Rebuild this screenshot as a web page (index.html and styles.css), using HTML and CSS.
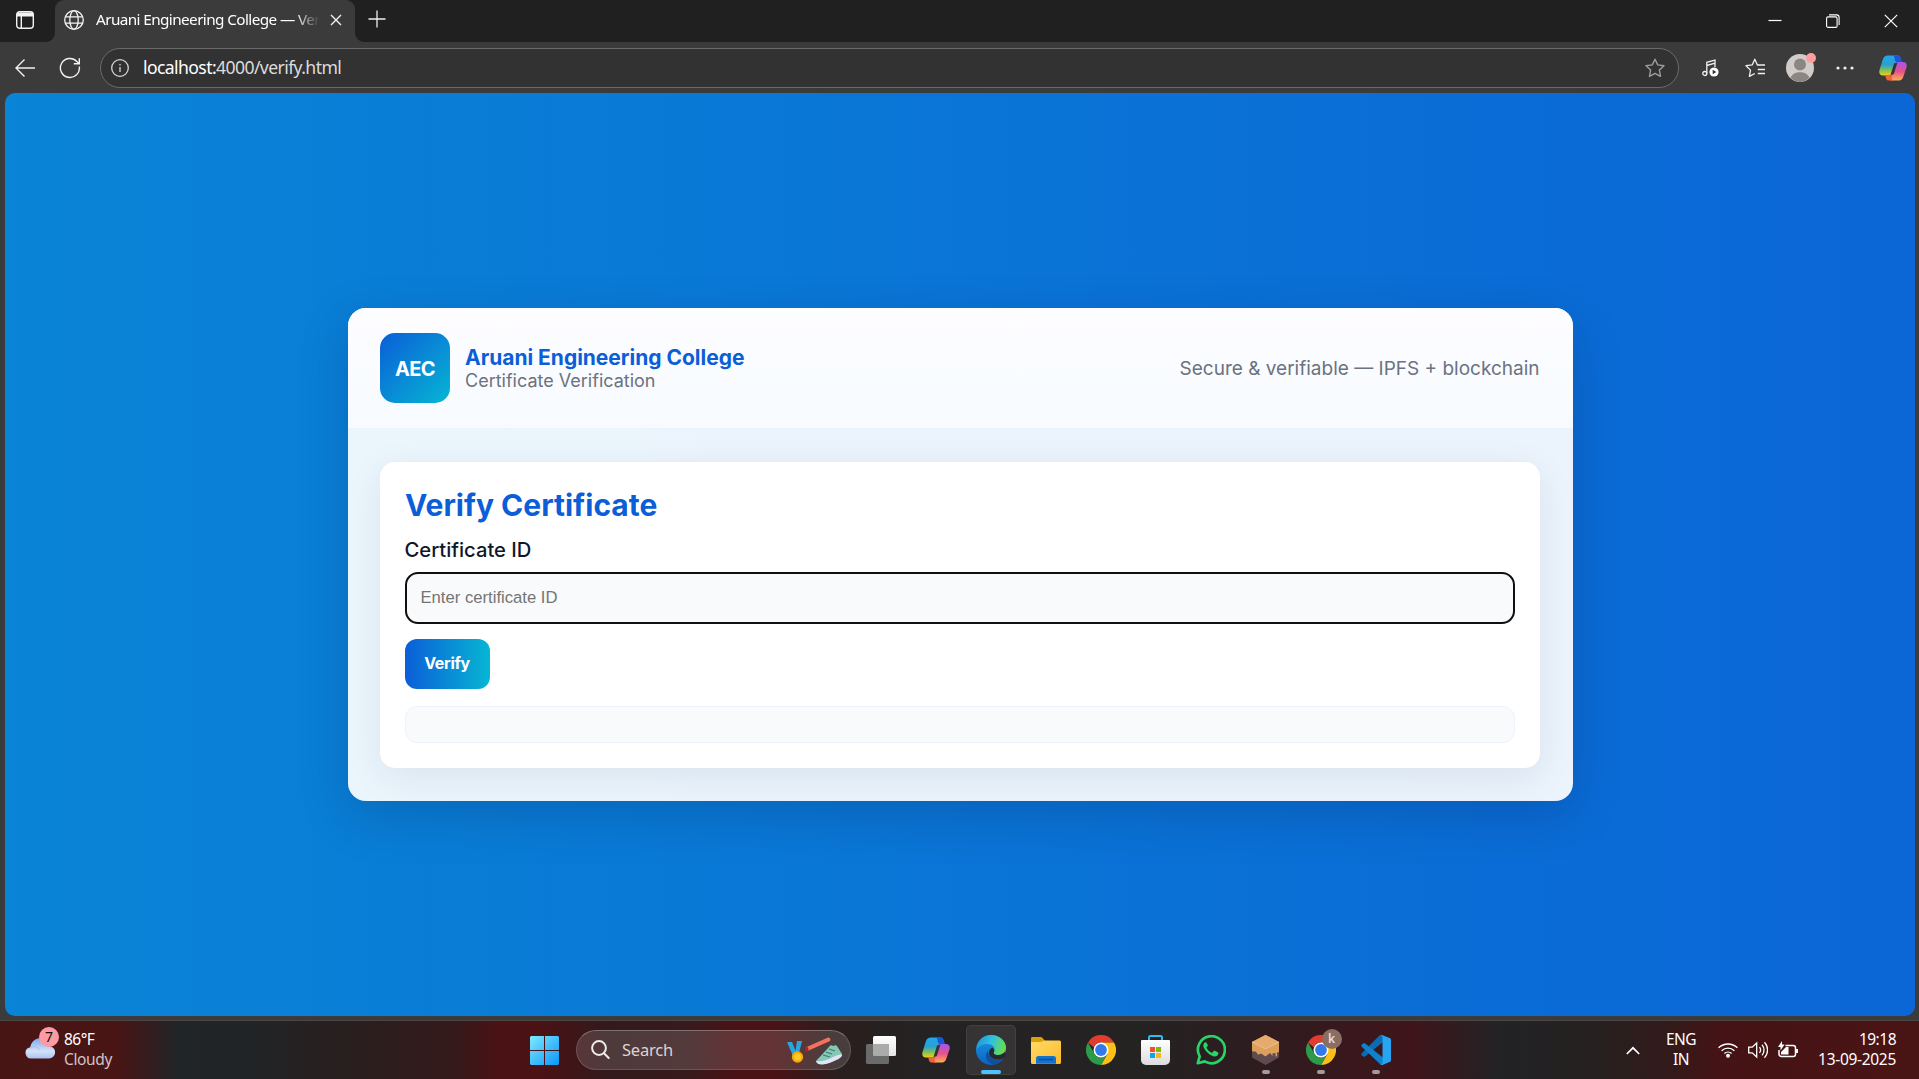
FILE: index.html
```html
<!DOCTYPE html>
<html lang="en">
<head>
<meta charset="utf-8">
<title>Aruani Engineering College — Verify Certificate</title>
<link rel="stylesheet" href="styles.css">
</head>
<body>
<svg class="defs" width="0" height="0" aria-hidden="true">
  <defs>
    <linearGradient id="cpA" x1="0" y1="0" x2="0" y2="1"><stop offset="0" stop-color="#1fa8ee"/><stop offset=".45" stop-color="#2b9fd0"/><stop offset=".7" stop-color="#72bd62"/><stop offset="1" stop-color="#f3cf16"/></linearGradient>
    <linearGradient id="cpB" x1="0" y1="0" x2="0" y2="1"><stop offset="0" stop-color="#9f57ee"/><stop offset=".5" stop-color="#e8508c"/><stop offset="1" stop-color="#ffae50"/></linearGradient>
    <linearGradient id="edA" x1="0" y1="0" x2="1" y2=".3"><stop offset="0" stop-color="#1b8fd8"/><stop offset=".55" stop-color="#33bfe0"/><stop offset="1" stop-color="#62dc57"/></linearGradient>
    <linearGradient id="edB" x1="0" y1="0" x2="0" y2="1"><stop offset="0" stop-color="#1a9be2"/><stop offset="1" stop-color="#0a62c4"/></linearGradient>
    <linearGradient id="winG" x1="0" y1="0" x2="1" y2="1"><stop offset="0" stop-color="#7deaff"/><stop offset="1" stop-color="#0d96f8"/></linearGradient>
    <linearGradient id="folG" x1="0" y1="0" x2="1" y2="1"><stop offset="0" stop-color="#ffdc66"/><stop offset="1" stop-color="#fcb92c"/></linearGradient>
    <linearGradient id="cloudG" x1="0" y1="0" x2="0" y2="1"><stop offset="0" stop-color="#7fa6ec"/><stop offset=".65" stop-color="#d3e2f8"/><stop offset="1" stop-color="#a9c3f2"/></linearGradient>
    <linearGradient id="storeG" x1="0" y1="0" x2="0" y2="1"><stop offset="0" stop-color="#fff"/><stop offset="1" stop-color="#dcdcdc"/></linearGradient>
    <linearGradient id="tvG" x1="0" y1="0" x2="0" y2="1"><stop offset="0" stop-color="#fff"/><stop offset="1" stop-color="#e4e4e4"/></linearGradient>
    <symbol id="copilot" viewBox="0 0 28 28">
      <path d="M9 1.500h9.500c1.800 0 2.600 1.200 3.100 3l1 3.500h-3.400c-1.800 0-2.700.8-3.200 2.600l-2.500 8.400c-.6 2-1.600 2.500-3.500 2.500H4c-3.200 0-4.300-2.500-3.500-5.500L3.800 5.500C4.600 2.800 6.400 1.500 9 1.500z" fill="url(#cpA)"/>
      <path d="M14.500 1.500h4c1.800 0 2.600 1.200 3.100 3l1 3.500h-3.400c-1.800 0-2.800-.2-3.300-2.100C15.500 4.300 15.600 2.500 14.500 1.500z" fill="#1a55dc"/>
      <path d="M19.600 8H24c3.200 0 4.300 2.500 3.500 5.500l-3.300 9.500c-.8 2.800-2.600 3.600-5.200 3.600h-5.600c-1.500 0-2.300-.3-1.800-2l3.900-13.800C16.300 8.700 17.700 8 19.600 8z" fill="url(#cpB)"/>
      <path d="M6.100 21.200h3.600c1.900 0 2.800-.5 3.300-2.200-.6 3.500-.3 6.500 1 7.600h-4c-1.800 0-2.600-1-3.100-2.700z" fill="#f4623a"/>
      <path d="M15.200 9.200 18.300 9l-3.600 11.300-3.200.7z" fill="#333"/>
    </symbol>
    <symbol id="chrome" viewBox="0 0 30 30">
      <path d="M2 7.500A15 15 0 0 1 28 7.500H15a7.500 7.500 0 0 0-7 5z" fill="#e33b2e"/>
      <path d="M28 7.500H15l6.500 11.250L15 30A15 15 0 0 0 28 7.500z" fill="#fbbf18"/>
      <path d="M2 7.500 8.500 18.750A7.500 7.500 0 0 0 21.500 18.750L15 30A15 15 0 0 1 2 7.500z" fill="#2c9a49"/>
      <circle cx="15" cy="15" r="7.500" fill="#fff"/><circle cx="15" cy="15" r="5.900" fill="#3478ea"/>
    </symbol>
  </defs>
</svg>

<div class="screen">
  <header class="tabstrip">
    <div class="strip-left">
      <svg width="18" height="18" viewBox="0 0 18 18" fill="none" stroke="#f2f2f2" stroke-width="1.400"><rect x=".7" y=".7" width="16.600" height="16.600" rx="3"/><path d="M1 1.500h16v4H1z" fill="#f2f2f2" stroke="none"/><path d="M5.300 5v12"/></svg>
    </div>
    <div class="tab-cell">
      <div class="tab">
        <svg width="20" height="20" viewBox="0 0 20 20" fill="none" stroke="#f4f4f4" stroke-width="1.300"><circle cx="10" cy="10" r="9.300"/><ellipse cx="10" cy="10" rx="4.200" ry="9.300"/><path d="M1.500 6.800h17M1.500 13.200h17"/></svg>
        <span class="tab-title">Aruani Engineering College — Ver</span>
        <svg class="tab-close" width="12" height="12" viewBox="0 0 12 12" stroke="#f4f4f4" stroke-width="1.400"><path d="M1 1l10 10M11 1 1 11"/></svg>
      </div>
    </div>
    <div class="strip-right">
      <svg class="newtab" width="18" height="18" viewBox="0 0 18 18" stroke="#eee" stroke-width="1.300"><path d="M9 .5v17M.5 9h17"/></svg>
      <div class="window-controls">
        <svg width="14" height="14" viewBox="0 0 14 14" stroke="#fff" stroke-width="1.200"><path d="M.5 6.500h13"/></svg>
        <svg width="14" height="14" viewBox="0 0 14 14" fill="none" stroke="#fff" stroke-width="1.100"><rect x=".6" y="2.900" width="10.500" height="10.500" rx="1.500"/><path d="M3 .9h7.700a2.400 2.400 0 0 1 2.400 2.400V11"/></svg>
        <svg width="14" height="14" viewBox="0 0 14 14" stroke="#fff" stroke-width="1.200"><path d="M.8.800l12.400 12.400M13.200.800.8 13.200"/></svg>
      </div>
    </div>
  </header>

  <nav class="toolbar">
    <svg class="nav-back" width="20" height="20" viewBox="0 0 20 20" fill="none" stroke="#f2f2f2" stroke-width="1.400"><path d="M20 10H1M9.500 1.500 1 10l8.500 8.500"/></svg>
    <svg class="nav-reload" width="22" height="22" viewBox="0 0 22 22" fill="none" stroke="#f2f2f2" stroke-width="1.400"><path d="M20.300 9.500A9.500 9.500 0 1 1 17.800 4.400L20 6.600M20.300 1.300v5.400h-5.500"/></svg>
    <div class="address">
      <svg width="18" height="18" viewBox="0 0 18 18" fill="none" stroke="#d6d6d6" stroke-width="1.300"><circle cx="9" cy="9" r="8.300"/><path d="M9 8v5M9 5v1.500"/></svg>
      <span class="url"><b>localhost:</b>4000/verify.html</span>
      <svg class="star" width="20" height="20" viewBox="0 0 20 20" fill="none" stroke="#9d9d9d" stroke-width="1.400" stroke-linejoin="round"><path d="M10 1.200l2.700 5.700 6.300.8-4.600 4.400 1.100 6.300-5.500-3-5.500 3 1.100-6.300L1 7.700l6.300-.8z"/></svg>
    </div>
    <div class="tools">
      <svg width="18" height="18" viewBox="0 0 18 18" fill="none" stroke="#f0f0f0" stroke-width="1.300"><circle cx="2.800" cy="14.500" r="2"/><path d="M4.800 14.500V3.300L13 1v7M4.800 6.500 13 4.200"/><circle cx="12" cy="13" r="4.600" fill="#fff" stroke="none"/><path d="M10.700 10.800v4.400l3.600-2.200z" fill="#333" stroke="none"/></svg>
      <svg width="21" height="20" viewBox="0 0 21 20" fill="none" stroke="#f0f0f0" stroke-width="1.300" stroke-linejoin="round"><path d="M20 7h-7.600L9.800 1.200 7.200 6.900l-6.200.8 4.500 4.400-1.100 6.300 5.400-2.900"/><path d="M12.800 11.500H20M12.800 15.500H20"/></svg>
      <div class="avatar"><svg width="28" height="28" viewBox="0 0 28 28"><circle cx="14" cy="14" r="14" fill="#cfccc9"/><circle cx="14" cy="10.500" r="6" fill="#8b8682"/><path d="M4.500 23.800c1.800-4 5.300-5.600 9.500-5.600s7.700 1.600 9.500 5.600A14 14 0 0 1 14 28a14 14 0 0 1-9.500-4.200z" fill="#8b8682"/></svg><i class="avatar-badge"></i></div>
      <svg width="18" height="4" viewBox="0 0 18 4" fill="#eee"><circle cx="2" cy="2" r="1.600"/><circle cx="9" cy="2" r="1.600"/><circle cx="16" cy="2" r="1.600"/></svg>
      <svg class="side-copilot" width="28" height="28"><use href="#copilot"/></svg>
    </div>
  </nav>

  <div class="viewport">
    <main class="card">
      <div class="card-head">
        <div class="logo">AEC</div>
        <div class="brand"><h1>Aruani Engineering College</h1><p>Certificate Verification</p></div>
        <div class="tagline">Secure &amp; verifiable — IPFS + blockchain</div>
      </div>
      <div class="card-body">
        <section class="panel">
          <h2>Verify Certificate</h2>
          <label for="cid">Certificate ID</label>
          <input id="cid" type="text" placeholder="Enter certificate ID">
          <button type="button">Verify</button>
          <div class="result"></div>
        </section>
      </div>
    </main>
  </div>

  <footer class="taskbar">
    <div class="weather">
      <div class="cloud"><svg width="30" height="22" viewBox="0 0 30 22"><path d="M6 21.500a5.700 5.700 0 0 1-.8-11.300C6.500 4.500 10.500 1 15.500 1c5 0 8.700 3 9.500 8.200a6.200 6.200 0 0 1-1 12.300z" fill="url(#cloudG)"/><path d="M5 11c4-2.500 8-1 9.500 2" fill="none" stroke="#a4c0f0"/></svg><i class="weather-badge">7</i></div>
      <div class="weather-text"><span>86°F</span><span class="dim">Cloudy</span></div>
    </div>
    <div class="start"><svg width="29" height="29" viewBox="0 0 29 29" fill="url(#winG)"><path d="M1 0h13v14H0V1zM15 0h13l1 1v13H15zM0 15h14v14H1l-1-1zM15 15h14v13l-1 1H15z"/></svg></div>
    <div class="search">
      <svg width="19" height="20" viewBox="0 0 19 20" fill="none" stroke="#f0eaea" stroke-width="2" stroke-linecap="round"><circle cx="8" cy="8" r="6.900"/><path d="M13 13.200l4.700 4.800"/></svg>
      <span>Search</span>
      <svg class="doodle" width="56" height="29" viewBox="0 0 56 29"><path d="M0 6h5l4 10-3 4zM10 5h5l-3 12-4 1z" fill="#2aa5e4"/><circle cx="10.500" cy="21" r="5.700" fill="#f5a800"/><circle cx="10.500" cy="21" r="3.500" fill="#ffc928"/><path d="M18.500 11.500 41 1.500c2-.8 3.200 2.700 1.500 3.800L20.500 15z" fill="#f4705f"/><ellipse cx="19.800" cy="13.200" rx="1.700" ry="2.500" fill="#9c2c2a"/><path d="M29 25 42 11c1-2 3-2 4-1 2-1 3-1 4 0l5 8c1 3-6 6-11 8-6 3-14 3-15-1z" fill="#85c8b6"/><path d="M29 25c5 1 12-1 17-4 4-2 8-3 9-2 0 3-6 5-10 7-7 3-15 4-16-1z" fill="#e4e2f4"/><path d="M36 19l7 2M39 16l6 2M42 13l6 2" stroke="#3c7d74" stroke-width="1.200"/></svg>
    </div>
    <div class="apps">
      <div class="app"><svg width="30" height="28" viewBox="0 0 30 28"><rect x="7" width="23" height="20" rx="1.500" fill="url(#tvG)"/><path d="M1.500 8h20a1.500 1.500 0 0 1 1.500 1.500v17a1.500 1.500 0 0 1-1.500 1.500h-20A1.500 1.500 0 0 1 0 26.500v-17A1.500 1.500 0 0 1 1.500 8z" fill="#6a6a6a"/><path d="M7 8h14.500A1.500 1.500 0 0 1 23 9.500V20H8.500A1.500 1.500 0 0 1 7 18.500z" fill="#ababab"/></svg></div>
      <div class="app"><svg width="28" height="28"><use href="#copilot"/></svg></div>
      <div class="app active"><svg width="30" height="30" viewBox="0 0 30 30"><circle cx="15" cy="15" r="15" fill="url(#edB)"/><path d="M1 10C3.500 3.500 9 0 15 0c8.500 0 15 6 15 12.500 0 4.500-3.200 7.500-7.500 7.500-4 0-5.500-1.500-4.500-3 2-4-1-8-6.500-8C6.500 9 2.500 11 .5 15z" fill="url(#edA)"/><path d="M18 17c-1 1.500.5 3 4.500 3 2.500 0 5-1.200 6.500-3.200 1.300 1.500.7 4.200-.7 6.200-6 3-13.300 1.500-15-3.500-.9-3 .5-6 3-6.800 1.700 1 2.400 2.600 1.700 4.300z" fill="#29292a"/><path d="M12 15.500c-.5 7.500 8 12 16.300 7.500A15 15 0 0 1 19 29.500C12 29 7 21.500 12 15.500z" fill="#11509c"/></svg></div>
      <div class="app"><svg width="30" height="27" viewBox="0 0 30 27"><path d="M0 1.500C0 .5.500 0 1.500 0h8c1 0 1.700.4 2.300 1.200L14 4v6H0z" fill="#dba008"/><path d="M0 5h10l3.500-1.500H28.500A1.500 1.500 0 0 1 30 5v20.500a1.500 1.500 0 0 1-1.500 1.500h-27A1.500 1.500 0 0 1 0 25.500z" fill="url(#folG)"/><path d="M5 26.800V21.500a2.500 2.500 0 0 1 2.500-2.500h15a2.500 2.500 0 0 1 2.500 2.500v5.300z" fill="#1273cc"/><path d="M8 22.500h14" stroke="#0b4f9c" stroke-width="1.500"/></svg></div>
      <div class="app"><svg width="30" height="30"><use href="#chrome"/></svg></div>
      <div class="app"><svg width="29" height="30" viewBox="0 0 29 30"><path d="M8 6V2.500A1.500 1.500 0 0 1 9.500 1h10A1.500 1.500 0 0 1 21 2.500V6" fill="none" stroke="#2cbdf0" stroke-width="2"/><path d="M1 5h27a1 1 0 0 1 1 1v19a5 5 0 0 1-5 5H5a5 5 0 0 1-5-5V6a1 1 0 0 1 1-1z" fill="url(#storeG)"/><path d="M9 12h5v5H9z" fill="#f0502a"/><path d="M15 12h5v5h-5z" fill="#80b90c"/><path d="M9 18h5v5H9z" fill="#0aa4ee"/><path d="M15 18h5v5h-5z" fill="#fcb80c"/></svg></div>
      <div class="app"><svg width="30" height="30" viewBox="0 0 30 30"><path d="M1.800 28.200 3.700 21.400A13.500 13.500 0 1 1 8.700 26.400z" fill="none" stroke="#27d467" stroke-width="2.700" stroke-linejoin="round"/><path d="M10.500 7.800c-.6-1-1.800-.6-2.500.4-1.200 1.700-.7 4 .5 5.800 2 3.200 4.700 6 8.800 7.300 2.500.7 4.700-.5 5.100-2.800.1-.8 0-1-.6-1.300l-2.800-1.400c-.6-.3-1-.2-1.400.3l-1 1.300c-.4.4-.8.4-1.300.1-2-.9-3.500-2.300-4.600-4.200-.3-.5-.2-.8.1-1.200l.9-1.200c.3-.5.2-.8 0-1.200z" fill="#27d467"/></svg></div>
      <div class="app running box"><svg width="27" height="30" viewBox="0 0 27 30"><path d="M13.500 0 27 7v15.500L13.500 30 0 22.500V7z" fill="#5f4a50"/><path d="M13.500 0 27 7v10l-2 .5V21l-1.500.8V18l-3 .5v2.500L18 18l-4.500 3.500L9 18.500 6 19.800l-2-3-4-.5V7z" fill="#dd9f5c"/><path d="M13.500 0 27 7l-13.500 7L0 7z" fill="#e6aa6c"/><path d="M0 7l13.500 7L27 7" fill="none" stroke="#f0c592" stroke-width=".8"/></svg></div>
      <div class="app running"><svg width="30" height="30"><use href="#chrome"/></svg><i class="profile">k</i></div>
      <div class="app running"><svg width="30" height="30" viewBox="0 0 30 30"><path d="M21.500 7.500 3.500 22 .5 20.500v-2L19 0l4 2z" fill="#0b6cb4"/><path d="M22 22.500 3.500 8 .5 9.500v2L19.500 29.500 23 28z" fill="#0f82cf"/><path d="M21 0l7.500 3c1 .4 1.500 1 1.500 2v20c0 1-.5 1.700-1.500 2.100L21.500 30c-1 .2-2-.2-2.600-.9 1 .3 2.600 0 2.600-1.600v-25c0-1.600-1.600-2-2.600-1.600C19.500.2 20.300 0 21 0z" fill="#27a5f2"/></svg></div>
    </div>
    <div class="tray">
      <svg width="14" height="9" viewBox="0 0 14 9" fill="none" stroke="#fff" stroke-width="1.700"><path d="M.8 8 7 1.800 13.200 8"/></svg>
      <div class="lang"><span>ENG</span><span>IN</span></div>
      <div class="status">
        <svg width="20" height="16" viewBox="0 0 20 16" fill="none" stroke="#fff" stroke-width="1.400"><path d="M.6 5.800a13.500 13.500 0 0 1 18.800 0M3.600 8.700a9.300 9.300 0 0 1 12.800 0M6.400 11.500a5.300 5.300 0 0 1 7.200 0"/><circle cx="10" cy="13.700" r="2" fill="#fff" stroke="none"/></svg>
        <svg width="20" height="18" viewBox="0 0 20 18" fill="none" stroke="#fff" stroke-width="1.300"><path d="M.7 6.200h3.500L8.700 2v14l-4.500-4.200H.7zM11.500 6.200a4.500 4.500 0 0 1 0 5.600M14 3.700a8 8 0 0 1 0 10.600M16.500 1.200a11.500 11.500 0 0 1 0 15.600"/></svg>
        <svg width="20" height="18" viewBox="0 0 20 18" fill="none" stroke="#fff" stroke-width="1.500"><path d="M7.500 4.500h7.700A2.300 2.300 0 0 1 17.500 6.800v6.400a2.300 2.300 0 0 1-2.300 2.300H3.300A2.300 2.300 0 0 1 1 13.200V9"/><path d="M17.500 8H20v4h-2.500zM3 13.500V11l5-5h2.500v7.500z" fill="#fff" stroke="none"/><path d="M4 0v3.500h2.500L2.500 9.500V6H0z" fill="#fff" stroke="none"/></svg>
      </div>
      <div class="clock"><span>19:18</span><span class="date">13-09-2025</span></div>
    </div>
  </footer>
</div>
</body>
</html>
```
FILE: styles.css
```css
* { box-sizing: border-box; }
body { margin: 0; overflow: hidden; background: #3b3b3b; font-family: "Noto Sans", "Open Sans", sans-serif; }
svg { display: block; flex: none; }
h1, h2, p { margin: 0; }
i { font-style: normal; }
.defs { position: absolute; }
.screen { width: 1919px; height: 1079px; display: flex; flex-direction: column; background: #3b3b3b; }

/* Tab strip */
.tabstrip { height: 42px; display: flex; flex: none; }
.strip-left { width: 55px; background: #202020; border-bottom-right-radius: 9px; padding: 11px 0 0 16px; }
.tab-cell { width: 300px; background: linear-gradient(#202020 50%, #3b3b3b 50%); }
.tab { height: 42px; background: #3b3b3b; border-radius: 9px 9px 0 0; display: flex; align-items: center; padding: 0 13px 2px 9px; }
.tab-title { width: 226px; margin: -2px 0 0 12px; white-space: nowrap; color: #fff; font-size: 15.3px; letter-spacing: -0.6px; mask-image: linear-gradient(90deg, #000 88%, transparent 99%); }
.tab-close { margin-left: auto; }
.strip-right { flex: 1; background: #202020; border-bottom-left-radius: 9px; display: flex; justify-content: space-between; padding: 10px 21px 0 13px; }
.window-controls { display: flex; gap: 44px; padding-top: 4px; }

/* Address toolbar */
.toolbar { height: 51px; flex: none; display: flex; align-items: center; padding: 0 12px 0 15px; }
.nav-reload { margin-left: 24px; }
.address { width: 1580px; height: 40px; margin-left: 19px; border: 1px solid #6b6b6b; border-radius: 20px; background: #323232; display: flex; align-items: center; padding: 0 13px 0 10px; }
.url { margin: -2px 0 0 14px; color: #dcdcdc; font-size: 17.6px; letter-spacing: -0.6px; }
.url b { font-weight: 400; color: #fff; }
.star { margin-left: auto; }
.tools { flex: 1; display: flex; align-items: center; gap: 25px; margin-left: 23px; }
.avatar { position: relative; margin-left: -5px; }
.avatar + svg { margin-left: -3px; }
.side-copilot { margin-left: auto; }
.avatar-badge { position: absolute; right: -2px; top: -1px; width: 10px; height: 10px; border-radius: 50%; background: #ff9e9e; }

/* Web page */
.viewport { height: 923px; flex: none; margin: 0 4px 0 5px; border-radius: 10px; background: linear-gradient(90deg, #0984d6, #0b66d6); display: flex; align-items: center; justify-content: center; font-family: Inter, sans-serif; }
.card { width: 1225px; height: 493px; border-radius: 18px; overflow: hidden; background: rgba(255, 255, 255, 0.92); box-shadow: 0 15px 50px rgba(2, 20, 60, 0.19); }
.card-head { height: 120px; padding: 0 33px 0 32px; display: flex; align-items: center; background: linear-gradient(#fdfdff, #f7fbff); }
.logo { width: 70px; height: 70px; border-radius: 15px; background: linear-gradient(135deg, #0b5ed7, #06b6d4); color: #fff; font-size: 20px; font-weight: 700; letter-spacing: -0.7px; padding: 1px 0 0 1px; display: flex; align-items: center; justify-content: center; }
.brand { margin: 2px 0 0 15.5px; }
.brand h1 { color: #0b5ed7; font-size: 21px; font-weight: 700; line-height: 24px; letter-spacing: -0.02px; }
.brand p { color: #6b7280; font-size: 18px; line-height: 22px; }
.tagline { margin: 1px 0 0 auto; color: #6b7280; font-size: 19px; }
.card-body { padding: 34px 33px 33px 32px; }
.panel { height: 306px; border-radius: 15px; background: #fff; box-shadow: 0 10px 38px rgba(15, 40, 80, 0.08); padding: 25px; display: flex; flex-direction: column; align-items: flex-start; }
.panel h2 { margin-left: 0.5px; color: #0b5ed7; font-size: 30px; font-weight: 700; line-height: 36px; }
.panel label { margin-top: 15px; color: #0f172a; font-size: 20.2px; font-weight: 550; line-height: 24px; }
.panel input { width: 1110px; height: 52px; margin-top: 10px; padding: 0 14px; border: 2px solid #101010; border-radius: 13px; background: #f8fafc; outline: none; font: 16.67px "Liberation Sans", sans-serif; }
.panel input::placeholder { color: #757575; }
.panel button { width: 85px; height: 50px; margin-top: 15px; padding: 0 0 2px; border: 0; border-radius: 12px; background: linear-gradient(90deg, #0b5ed7, #06b6d4); color: #fff; font: 700 16px Inter, sans-serif; letter-spacing: -0.3px; }
.result { width: 1110px; height: 37px; margin-top: 17px; border: 1px solid #eef2ff; border-radius: 12px; background: #f8fafc; }

/* Taskbar */
.taskbar { height: 59px; margin-top: 4px; flex: none; border-top: 1px solid #4d4646; display: flex; align-items: center; color: #fff; font-size: 15.5px;
  background: linear-gradient(90deg, #481515 0, #4a1414 115px, #202527 180px, #212426 250px, #2c1d1d 380px, #341a1b 450px, #4a1215 500px, #4a1215 540px, #321a1b 610px, #381a1b 690px, #4a1215 735px, #4a1215 775px, #2c1e1e 835px, #242222 910px, #252222 1150px, #301b1f 1280px, #40151a 1410px, #222326 1500px, #26201f 1600px, #331a1a 1670px, #451315 1720px, #4a1414 1919px); }
.weather { width: 517px; padding-left: 25px; display: flex; align-items: center; }
.cloud { position: relative; margin-top: -5px; }
.weather-badge { position: absolute; left: 14px; top: -10px; width: 20px; height: 20px; border-radius: 50%; background: #ff99a4; color: #111; font-size: 14px; line-height: 20px; text-align: center; }
.weather-text, .lang, .clock { display: flex; flex-direction: column; line-height: 20px; letter-spacing: -0.5px; margin-top: -3px; }
.weather-text { margin-left: 9px; }
.dim { color: #cfc4c4; letter-spacing: -0.35px; }
.start { width: 55px; display: flex; justify-content: center; }
.search { width: 275px; height: 40px; margin-left: 4px; border: 1px solid rgba(255, 255, 255, 0.14); border-top-color: rgba(255, 255, 255, 0.28); border-radius: 20px; background: rgba(255, 255, 255, 0.14); display: flex; align-items: center; padding: 0 7px 0 14px; color: #ddd3d3; font-size: 16.5px; letter-spacing: -0.2px; }
.search span { margin: -1px 0 0 12px; }
.doodle { margin-left: auto; }
.apps { margin-left: 2px; display: flex; }
.app { position: relative; width: 50px; height: 50px; margin: 0 2.5px; border-radius: 5px; display: flex; align-items: center; justify-content: center; }
.active { background: rgba(255, 255, 255, 0.08); border: 1px solid rgba(255, 255, 255, 0.07); }
.active::after, .running::after { content: ""; position: absolute; left: 21px; bottom: 1px; width: 8px; height: 4px; border-radius: 2px; background: #a39a9a; }
.active::after { left: 14px; bottom: 0; width: 20px; background: #4cc2ff; }
.profile { position: absolute; left: 26px; top: 4px; width: 20px; height: 20px; border-radius: 50%; background: #8a6e64; color: #e8dedb; font-size: 12px; font-weight: 600; line-height: 19px; text-align: center; }
.tray { margin-left: auto; padding-right: 23px; display: flex; align-items: center; }
.lang { width: 40px; margin-left: 21px; text-align: center; }
.status { display: flex; gap: 10px; margin-left: 17px; align-items: center; }
.clock { width: 90px; margin-left: 8px; text-align: right; }
.date { letter-spacing: -0.3px; }
```
